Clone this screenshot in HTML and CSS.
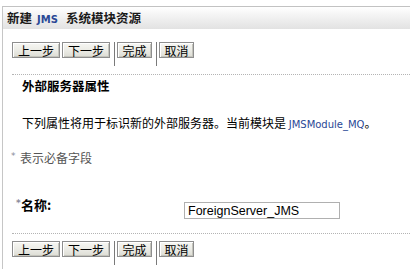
FILE: index.html
```html
<!DOCTYPE html>
<html lang="zh-CN">
<head>
<meta charset="utf-8">
<title>新建 JMS 系统模块资源</title>
<link rel="stylesheet" href="styles.css">
</head>
<body>
<div class="page">
  <div class="title">新建<span class="title-code">JMS</span>系统模块资源</div>
  <div class="toolbar">
    <button class="btn btn-wide">上一步</button>
    <button class="btn btn-wide">下一步</button>
    <span class="sep"></span>
    <button class="btn btn-narrow">完成</button>
    <span class="sep"></span>
    <button class="btn btn-narrow">取消</button>
  </div>
  <div class="section">
    <h2 class="heading">外部服务器属性</h2>
    <p class="desc">下列属性将用于标识新的外部服务器。当前模块是 <span class="mod">JMSModule_MQ</span>。</p>
  </div>
  <p class="note"><span class="req">*</span>表示必备字段</p>
  <div class="field">
    <label class="label" for="name"><span class="req">*</span>名称:</label>
    <input class="input" id="name" type="text" value="ForeignServer_JMS">
  </div>
  <div class="rule"></div>
  <div class="toolbar toolbar-bottom">
    <button class="btn btn-wide">上一步</button>
    <button class="btn btn-wide">下一步</button>
    <span class="sep"></span>
    <button class="btn btn-narrow">完成</button>
    <span class="sep"></span>
    <button class="btn btn-narrow">取消</button>
  </div>
</div>
</body>
</html>
```

FILE: styles.css
```css
html, body {
  margin: 0;
  padding: 0;
  background: #ffffff;
}

body {
  font-family: "Noto Sans CJK SC", "Noto Sans", sans-serif;
  font-size: 12px;
  color: #000;
  overflow: hidden;
}

.page {
  margin: 6px 0 0 2px;
  border-left: 1px solid #c6c6c6;
  border-top: 1px solid #c2c2c2;
  height: 262px;
}

.title {
  height: 22px;
  line-height: 22px;
  padding-left: 4px;
  font-size: 12.5px;
  font-weight: bold;
  background: linear-gradient(to bottom, #ffffff 0%, #f3f3f3 40%, #e2e2e2 100%);
  color: #1a1a1a;
}

.title-code {
  font-family: "DejaVu Sans", sans-serif;
  font-size: 10px;
  font-weight: bold;
  color: #2a4896;
  margin: 0 8px 0 5px;
}

.toolbar {
  display: flex;
  align-items: flex-start;
  margin-top: 13px;
  padding-left: 9px;
  height: 24px;
}

.toolbar-bottom {
  margin-top: 7px;
}

.btn {
  box-sizing: border-box;
  height: 16px;
  padding: 0;
  margin: 0 2px 0 0;
  font-family: "Noto Sans CJK SC", sans-serif;
  font-size: 12px;
  line-height: 13px;
  color: #000;
  background: linear-gradient(to bottom, #f7f7f3 0%, #ecece6 50%, #dcdcd4 100%);
  border: 1px solid #8e8e8e;
  box-shadow: inset 1px 1px 0 #ffffff, inset -1px -1px 0 #c4c4bc;
  border-radius: 0;
}

.btn-wide {
  width: 48px;
}

.btn-narrow {
  width: 35px;
}

.sep {
  width: 1px;
  height: 24px;
  background: #7a7a7a;
  margin: 0 2px 0 2px;
}

.section {
  margin: 8px 0 0 9px;
  border-top: 1px dotted #b4b4b4;
  padding-left: 10px;
}

.heading {
  margin: 3px 0 0 0;
  font-size: 12.5px;
  font-weight: bold;
  line-height: 16px;
}

.desc {
  margin: 21px 0 0 0;
  line-height: 16px;
}

.mod {
  font-family: "DejaVu Sans", sans-serif;
  font-size: 10px;
  color: #2a4896;
}

.note {
  margin: 17px 0 0 0;
  padding-left: 8px;
  line-height: 16px;
  color: #555555;
}

.req {
  display: inline-block;
  width: 9px;
  font-family: "DejaVu Sans", sans-serif;
  font-size: 9px;
  color: #8a8a9a;
  vertical-align: top;
  line-height: 12px;
}

.field {
  display: grid;
  grid-template-columns: 168px 156px;
  align-items: start;
  margin-top: 31px;
  padding-left: 13px;
  height: 22px;
}

.label {
  font-size: 13px;
  font-weight: bold;
  line-height: 16px;
}

.label .req {
  width: 5px;
}

.input {
  box-sizing: border-box;
  width: 156px;
  height: 17px;
  margin: 5px 0 0 0;
  padding: 0 0 0 3px;
  border: 1px solid #b0b0b0;
  font-family: "Liberation Sans", Arial, sans-serif;
  font-size: 12.5px;
  color: #000;
  outline: none;
}

.rule {
  margin: 14px 0 0 9px;
  border-top: 1px dotted #b4b4b4;
}
```
